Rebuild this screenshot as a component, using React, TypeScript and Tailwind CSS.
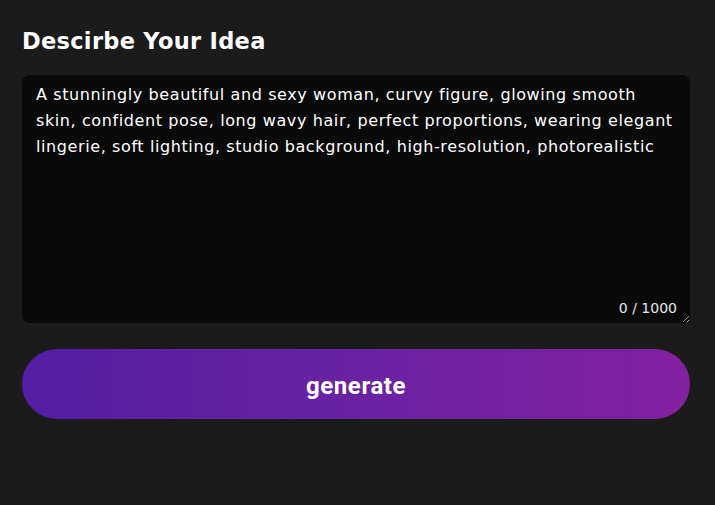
import { useState } from 'react'

const PLACEHOLDER =
  'A stunningly beautiful and sexy woman, curvy figure, glowing smooth\nskin, confident pose, long wavy hair, perfect proportions, wearing elegant\nlingerie, soft lighting, studio background, high-resolution, photorealistic'

export default function App() {
  const [idea, setIdea] = useState('')

  return (
    <div className="min-h-[505px] w-full bg-[#1b1b1b] pl-[22px] pr-[25px] pt-[26px] font-['DejaVu_Sans',sans-serif] text-white">
      <h2 className="text-[22.5px] font-bold leading-[30px] tracking-[0.3px]">Descirbe Your Idea</h2>

      <div className="relative mt-[19px]">
        <textarea
          value={idea}
          maxLength={1000}
          onChange={(event) => setIdea(event.target.value)}
          placeholder={PLACEHOLDER}
          className="block h-[248px] w-full resize-y rounded-lg bg-[#0a0a0a] pl-[14px] pr-[4px] pt-[7px] text-[16px] leading-[26px] tracking-[0.6px] text-white outline-none placeholder:text-white"
        />
        <span className="pointer-events-none absolute bottom-[5px] right-[13px] text-[14px] leading-5 text-white/90">
          {idea.length} / 1000
        </span>
      </div>

      <button
        type="button"
        className="mt-[26px] flex h-[70px] w-full items-center justify-center rounded-full bg-gradient-to-r from-[#531ea5] to-[#8220a0] pt-[3px] font-['Roboto',sans-serif] text-[24px] font-bold tracking-[0.6px] text-white"
      >
        generate
      </button>
    </div>
  )
}
